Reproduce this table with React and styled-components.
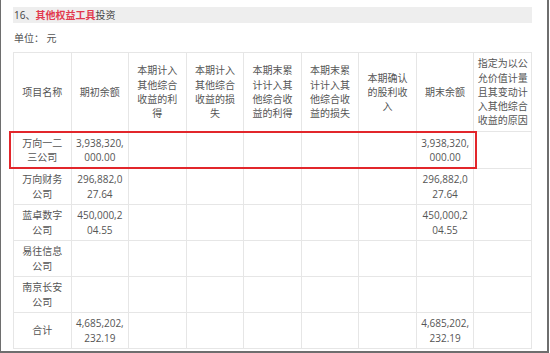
import React from "react";
import styled, { createGlobalStyle } from "styled-components";

const GlobalStyle = createGlobalStyle`
  html, body {
    margin: 0;
    padding: 0;
    background: #ffffff;
  }
  body {
    font-family: "Open Sans", "Noto Sans CJK SC", sans-serif;
  }
`;

const headers = [
    ["项目名称"],
    ["期初余额"],
    ["本期计入", "其他综合", "收益的利", "得"],
    ["本期计入", "其他综合", "收益的损", "失"],
    ["本期末累", "计计入其", "他综合收", "益的利得"],
    ["本期末累", "计计入其", "他综合收", "益的损失"],
    ["本期确认", "的股利收", "入"],
    ["期末余额"],
    ["指定为以公", "允价值计量", "且其变动计", "入其他综合", "收益的原因"],
];

const rows = [
    {name: ["万向一二", "三公司"], open: ["3,938,320,", "000.00"], close: ["3,938,320,", "000.00"], tall: true},
    {name: ["万向财务", "公司"], open: ["296,882,0", "27.64"], close: ["296,882,0", "27.64"]},
    {name: ["蓝卓数字", "公司"], open: ["450,000,2", "04.55"], close: ["450,000,2", "04.55"]},
    {name: ["易往信息", "公司"], open: [], close: []},
    {name: ["南京长安", "公司"], open: [], close: []},
    {name: ["合计"], open: ["4,685,202,", "232.19"], close: ["4,685,202,", "232.19"]},
];

const Lines = ({lines}) => lines.map((line, i) => (
    <React.Fragment key={i}>
        {i > 0 && <br/>}
        {line}
    </React.Fragment>
));

const App = () => {
    return (
        <>
            <GlobalStyle/>
            <Frame>
                <TitleBar>
                    16、<Highlight>其他权益工具</Highlight>投资
                </TitleBar>
                <Unit>单位：&nbsp;元</Unit>
                <TableWrap>
                    <Table>
                        <thead>
                        <tr>
                            {headers.map((h, i) => (
                                <HeadCell key={i}><Lines lines={h}/></HeadCell>
                            ))}
                        </tr>
                        </thead>
                        <tbody>
                        {rows.map((r, i) => (
                            <Row key={i} $tall={r.tall}>
                                <Cell><Lines lines={r.name}/></Cell>
                                <Cell><Lines lines={r.open}/></Cell>
                                <Cell/>
                                <Cell/>
                                <Cell/>
                                <Cell/>
                                <Cell/>
                                <Cell><Lines lines={r.close}/></Cell>
                                <Cell/>
                            </Row>
                        ))}
                        </tbody>
                    </Table>
                    <Marker/>
                </TableWrap>
            </Frame>
        </>
    );
};

export default App;

const Frame = styled.div`
  box-sizing: border-box;
  width: 549px;
  height: 353px;
  padding: 7px 0 0 13px;
  border: 2px solid #6e6e6e;
  border-top: none;
  border-left-width: 1px;
  color: #555;
  overflow: hidden;
`
const TitleBar = styled.div`
  width: 518px;
  height: 16px;
  line-height: 16px;
  padding-left: 1px;
  background-color: #eeeeee;
  font-size: 10px;
  color: #444;
  margin-left: -1px;
`
const Highlight = styled.span`
  color: #e23a4f;
  font-weight: bold;
`
const Unit = styled.div`
  margin-top: 8px;
  font-size: 10px;
  line-height: 14px;
  color: #555;
`
const TableWrap = styled.div`
  position: relative;
  margin-top: 7px;
  margin-left: -1px;
`
const Table = styled.table`
  width: 519px;
  table-layout: fixed;
  border-collapse: collapse;
  font-size: 10px;
  line-height: 14.3px;
  color: #555;
`
const HeadCell = styled.th`
  height: 78px;
  padding: 0 2px;
  border: 1px solid #e6e6e6;
  font-weight: normal;
  text-align: center;
  vertical-align: middle;
  white-space: nowrap;
`
const Row = styled.tr`
  height: ${props => props.$tall ? 37 : 36}px;
`
const Cell = styled.td`
  padding: 0 2px;
  border: 1px solid #e6e6e6;
  text-align: center;
  vertical-align: middle;
  white-space: nowrap;
`
const Marker = styled.div`
  position: absolute;
  left: -4px;
  top: 79px;
  width: 464px;
  height: 34px;
  border: 2px solid #e2262b;
`
